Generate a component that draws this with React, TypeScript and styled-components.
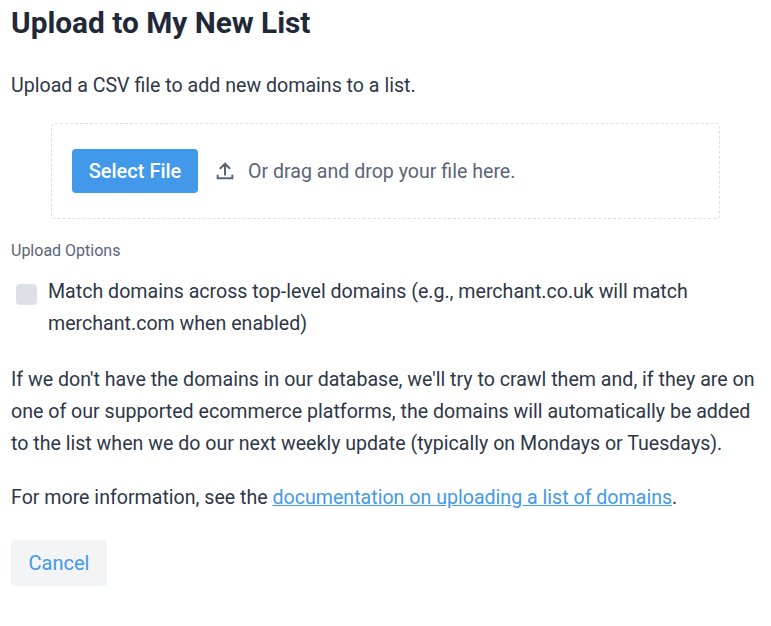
import React from "react";
import styled, { createGlobalStyle } from "styled-components";

const G = createGlobalStyle`
  body { margin: 0; font-family: Roboto, "Liberation Sans", sans-serif; color: #273142; background: #fff; }
`;
const Page = styled.div`padding: 0 11px; width: 749px;`;
const Title = styled.h1`font-size: 29.8px; font-weight: 700; margin: 5px 0 0; line-height: 36px; color: #1f2937;`;
const Text = styled.p<{ $mt?: number }>`font-size: 19.6px; line-height: 32px; margin: ${p => p.$mt ?? 0}px 0 0; color: #2d3748;`;
const Drop = styled.div`
  margin: 21px 0 0 40px; width: 669px; height: 96px; box-sizing: border-box;
  border: 1px dashed #dcdfe4; border-radius: 4px;
  display: flex; align-items: center; padding-left: 20px; gap: 16px;
`;
const Primary = styled.button`
  background: #4299e9; color: #fff; border: 0; border-radius: 4px; height: 44px; width: 126px;
  font: 500 20px Roboto, sans-serif;
`;
const Hint = styled.span`display: flex; align-items: center; gap: 12px; font-size: 19.6px; color: #5a6577;`;
const Label = styled.div`font-size: 16px; color: #5a6577; margin-top: 22px; line-height: 20px;`;
const Opt = styled.label`display: flex; gap: 11px; margin-top: 21px; align-items: flex-start;`;
const Box = styled.span`width: 21px; height: 21px; border-radius: 4px; background: #dde1e7; margin: 2px 0 0 5px; flex: none;`;
const OptText = styled.span`font-size: 19.6px; line-height: 32px; color: #2d3748; margin-top: -6px;`;
const Link = styled.a`color: #4299e9; text-decoration: underline;`;
const Cancel = styled.button`
  margin-top: 26px; background: #f3f4f6; color: #4299e9; border: 0; border-radius: 4px;
  width: 96px; height: 46px; font: 400 20px Roboto, sans-serif;
`;

export default function App() {
  return (
    <Page>
      <G />
      <Title>Upload to My New List</Title>
      <Text $mt={29}>Upload a CSV file to add new domains to a list.</Text>
      <Drop>
        <Primary>Select File</Primary>
        <Hint>
          <svg width="22" height="22" viewBox="0 0 24 24" fill="none" stroke="#5a6577" strokeWidth="2.2" strokeLinecap="round">
            <path d="M12 16V4M7 9l5-5 5 5M4 17v3h16v-3" />
          </svg>
          Or drag and drop your file here.
        </Hint>
      </Drop>
      <Label>Upload Options</Label>
      <Opt>
        <Box />
        <OptText>Match domains across top-level domains (e.g., merchant.co.uk will match merchant.com when enabled)</OptText>
      </Opt>
      <Text $mt={24}>If we don't have the domains in our database, we'll try to crawl them and, if they are on one of our supported ecommerce platforms, the domains will automatically be added to the list when we do our next weekly update (typically on Mondays or Tuesdays).</Text>
      <Text $mt={22}>For more information, see the <Link href="#">documentation on uploading a list of domains</Link>.</Text>
      <Cancel>Cancel</Cancel>
    </Page>
  );
}
